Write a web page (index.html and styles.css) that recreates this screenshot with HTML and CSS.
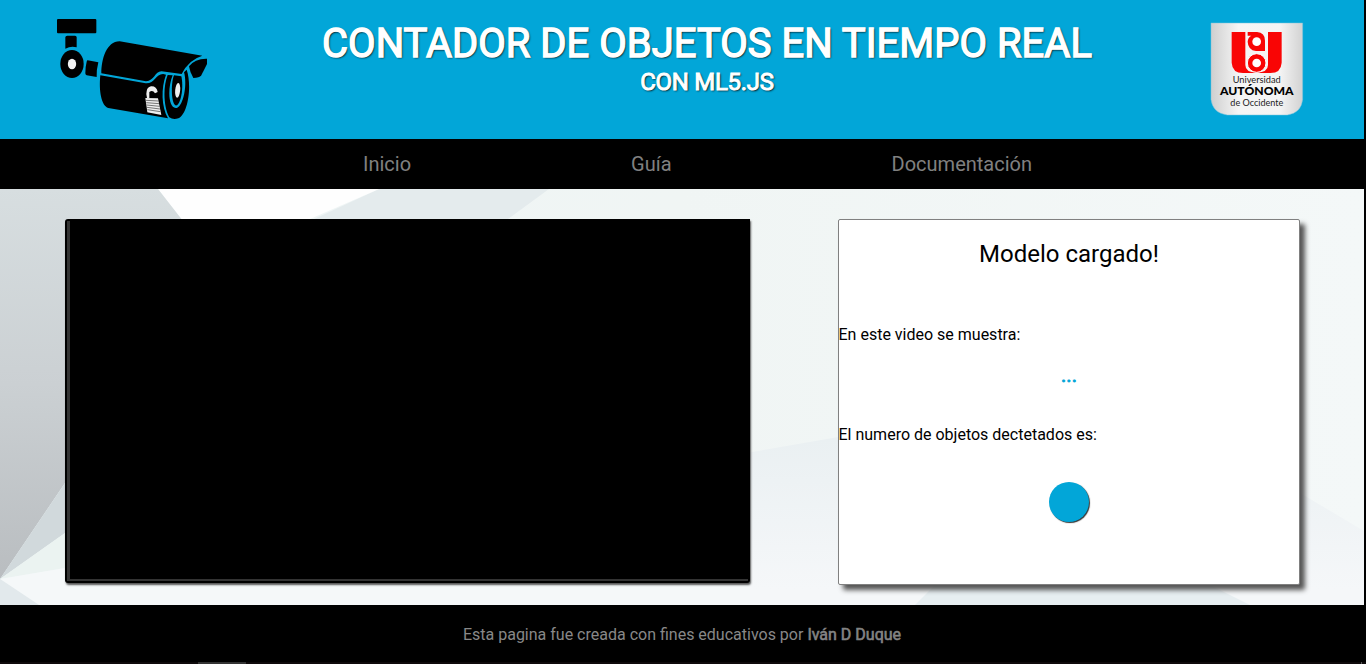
FILE: index.html
```html
<!DOCTYPE html>
<html lang="es">
<head>
<meta charset="utf-8">
<title>Contador de objetos</title>
<link rel="stylesheet" href="styles.css">
</head>
<body>
<div class="page">
  <header class="header">
    <svg class="camera" viewBox="51 27 450 300" aria-hidden="true">
      <rect x="51" y="27" width="118" height="43" rx="3"/>
      <path d="M82 77H105Q110 77 110 82V112Q93 107 76 116V82Q76 77 82 77Z"/>
      <ellipse cx="96" cy="162" rx="35" ry="42"/>
      <ellipse cx="96" cy="162" rx="12.5" ry="15.500" fill="#f2f2f2"/>
      <path d="M143 151L175 157Q169 180 170 201L140 196Q136 195 136 190Q136 170 140 155Q141 151 143 151Z"/>
      <path d="M184 190C184 149 199 94 239 94L487 137Q446 149 425 192L365 184C345 183 343 213 318 214Z"/>
      <path d="M181 196L317 220C344 222 347 191 370 192L378 194C363 234 364 290 384 325L205 294C184 288 176 242 181 196Z"/>
      <path d="M447 169Q465 145 501 146V162L484 196Q478 204 460 204Q450 188 447 169Z"/>
      <path d="M383 195L398 196C382 236 385 292 407 294C429 295 443 224 432 187L440 179C456 225 445 312 415 325Q399 330 388 322C370 290 369 230 383 195Z"/>
      <path d="M402 196L424 199C431 229 424 277 411 286C394 293 391 224 402 196Z"/>
      <ellipse cx="413" cy="241" rx="7.500" ry="22" transform="rotate(5 413 241)" fill="#eee"/>
      <path d="M328 264V246Q338 238 345 250L353 246Q350 228 333 229Q321 232 320 244Q317 253 321 264Z" fill="#eee"/>
      <path d="M316 264L354 265L364 315L322 307Z" fill="#eee"/>
      <path d="M318 271L356 273M319 278L357 281M320 285L359 289M321 292L360 297M322 299L361 305" stroke="#222" stroke-width="1.800"/>
    </svg>
    <div class="titles">
      <h1 class="title">CONTADOR DE OBJETOS EN TIEMPO REAL</h1>
      <h2 class="subtitle">CON ML5.JS</h2>
    </div>
    <svg class="university" viewBox="30 36 282 282" aria-hidden="true">
      <defs>
        <linearGradient id="shield"><stop stop-color="#cfcfcf"/><stop offset=".3" stop-color="#f5f5f5"/><stop offset=".75" stop-color="#f4f4f4"/><stop offset="1" stop-color="#d2d2d2"/></linearGradient>
      </defs>
      <path d="M33 39H308V268Q304 309 262 315H82Q38 310 33 268Z" fill="url(#shield)" stroke="#7dc5dc" stroke-width="1.500"/>
      <path d="M95 66H136V165Q136 187 170 188Q204 187 204 165V66H245V158Q243 189 211 189H129Q97 189 95 158Z" fill="#f90505"/>
      <circle cx="170" cy="159" r="28" fill="#f90505" stroke="#fff" stroke-width="3"/>
      <circle cx="170" cy="159" r="13" fill="#fff"/>
      <path d="M143 66H171Q195 68 195 92V123H168Q144 120 143 95Q144 82 154 77H143Z" fill="#f90505"/>
      <circle cx="170" cy="95" r="13" fill="#fff"/>
      <text class="logo-text" x="98" y="219" textLength="144" lengthAdjust="spacingAndGlyphs">Universidad</text>
      <text class="logo-text logo-strong" x="60" y="256" textLength="221" lengthAdjust="spacingAndGlyphs">AUTÓNOMA</text>
      <text class="logo-text" x="91" y="287" textLength="159" lengthAdjust="spacingAndGlyphs">de Occidente</text>
    </svg>
  </header>
  <nav class="nav">
    <a class="link">Inicio</a>
    <a class="link">Guía</a>
    <a class="link">Documentación</a>
  </nav>
  <main class="main">
    <svg class="backdrop" viewBox="0 0 1364 416" preserveAspectRatio="none" aria-hidden="true">
      <defs>
        <linearGradient id="slate" x1="0" y1="0" x2="0" y2="1"><stop stop-color="#d7dee0"/><stop offset=".5" stop-color="#cbd0d3"/><stop offset="1" stop-color="#b9bdc0"/></linearGradient>
        <linearGradient id="floor" gradientUnits="userSpaceOnUse" x1="0" y1="250" x2="0" y2="400"><stop stop-color="#eaf0f2"/><stop offset="1" stop-color="#f5f7f9"/></linearGradient>
        <linearGradient id="sky"><stop stop-color="#eef5f6"/><stop offset=".5" stop-color="#f0f5f4"/><stop offset="1" stop-color="#f4f8f8"/></linearGradient>
      </defs>
      <path d="M0 0H1364V416H0Z" fill="url(#sky)"/>
      <path d="M379 0H549L508 30L480 50H271Z" fill="#e4ebed"/>
      <path d="M158 0H379L310 30L264 50H197Z" fill="#fefefe"/>
      <path d="M0 0H158L197 50H80V294H65L0 390Z" fill="url(#slate)"/>
      <path d="M0 390L65 294H80V334L65 344Z" fill="#d1d9dc"/>
      <path d="M0 390L65 344L80 334V376L65 379Z" fill="#ebf3f1"/>
      <path d="M700 272L752 263L850 246V416H700Z" fill="url(#floor)"/>
      <path d="M0 390L65 379H750V416H39Z" fill="#f5f8f9"/>
      <path d="M0 390L39 416H0Z" fill="#e2e9ec"/>
      <path d="M840 380H1364V416H840Z" fill="#f5f7f9"/>
      <path d="M1290 298L1364 342V416H1290Z" fill="url(#floor)"/>
      <path d="M915 416L950 381H1180L1250 416Z" fill="#e7eef1"/>
    </svg>
    <div class="video"><div class="screen"></div></div>
    <section class="panel">
      <p class="status">Modelo cargado!</p>
      <p class="label">En este video se muestra:</p>
      <p class="result">...</p>
      <p class="label">El numero de objetos dectetados es:</p>
      <div class="count"></div>
    </section>
  </main>
  <footer class="footer"><p class="credit">Esta pagina fue creada con fines educativos por <b class="author">Iván D Duque</b></p></footer>
  <div class="scroll"><span class="thumb"></span><span class="tick"></span></div>
</div>
</body>
</html>
```
FILE: styles.css
```css
* { box-sizing: border-box; }
body { margin: 0; background: #000; font-family: Roboto, sans-serif; font-size: 16px; overflow: hidden; }
h1, h2, p { margin: 0; font-weight: 400; }
.page { width: 1364px; height: 664px; display: flex; flex-direction: column; }
.header { height: 139px; background: #02a6d8; display: flex; align-items: flex-start; justify-content: space-between; padding: 19px 60px 0 57px; }
.camera { width: 150px; height: 100px; }
.titles { text-align: center; color: #fff; text-shadow: 1px 1px 2px #000; padding-right: 3px; }
.title { font-size: 40px; line-height: 49px; -webkit-text-stroke: 1.4px #fff; }
.subtitle { font-size: 24px; line-height: 28px; letter-spacing: -.3px; -webkit-text-stroke: 1px #fff; }
.university { width: 94px; height: 94px; margin-top: 3px; }
.logo-text { font-family: Lato, sans-serif; font-size: 28px; fill: #222; }
.logo-strong { font-size: 31px; font-weight: 900; fill: #000; }
.nav { height: 50px; background: #000; display: flex; gap: 220px; padding-left: 363px; }
.link { color: #808080; font-size: 20px; line-height: 50px; }
.main { height: 416px; position: relative; display: flex; align-items: flex-start; padding: 30px 64px 0 65px; justify-content: space-between; }
.backdrop { position: absolute; inset: 0; width: 100%; height: 100%; }
.video { position: relative; width: 685px; height: 364px; padding: 2px; background: #000; border-radius: 3px 0 3px 3px; box-shadow: 1px 2px 2px #555; }
.screen { height: 360px; border-left: 3px solid #333; border-bottom: 2px solid #333; background: #000; }
.panel { position: relative; width: 462px; height: 366px; border: 1px solid #808080; border-radius: 2px; background: #fff; box-shadow: 5px 5px 5px #555; display: flex; flex-direction: column; }
.status { margin-top: 20px; font-size: 24px; line-height: 28px; text-align: center; }
.label { line-height: 20px; margin-top: 57px; margin-left: -.5px; }
.result { margin-top: 20px; height: 20px; font-size: 20px; line-height: 20px; text-align: center; color: #02a6d8; -webkit-text-stroke: .8px #02a6d8; }
.result + .label { margin-top: 40px; }
.count { width: 40px; height: 40px; margin: 37px 0 0 210px; border-radius: 50%; background: #02a6d8; box-shadow: 1px 1px 1px #333; }
.footer { height: 57px; background: #000; color: #888; text-align: center; padding-top: 20px; }
.credit { line-height: 20px; }
.author { font-weight: 400; -webkit-text-stroke: .6px #808080; }
.scroll { width: 1366px; height: 2px; background: #0e0a0b; display: flex; justify-content: space-between; padding: 0 4px 0 198px; }
.thumb { width: 48px; background: #333; }
.tick { width: 1px; background: #555; }
```
